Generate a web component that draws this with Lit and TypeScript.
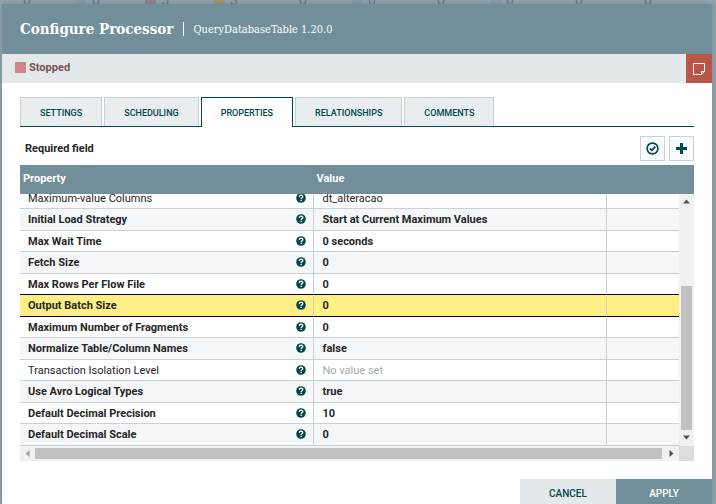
import { LitElement, html, css, svg } from "lit";
import { customElement, state } from "lit/decorators.js";
import { classMap } from "lit/directives/class-map.js";

interface Row { name: string; value: string; required: boolean; unset?: boolean }

const TABS = ["Settings", "Scheduling", "Properties", "Relationships", "Comments"];

const COUNTS = [
  { n: 0, kind: "" }, { n: 0, kind: "run" }, { n: 5, kind: "stopped" }, { n: 3, kind: "warn" }, { n: 0, kind: "" },
  { n: 0, kind: "run" }, { n: 0, kind: "" }, { n: 0, kind: "run" }, { n: 0, kind: "" }, { n: 0, kind: "" },
];

const ROWS: Row[] = [
  { name: "Maximum-value Columns", value: "dt_alteracao", required: false },
  { name: "Initial Load Strategy", value: "Start at Current Maximum Values", required: true },
  { name: "Max Wait Time", value: "0 seconds", required: true },
  { name: "Fetch Size", value: "0", required: true },
  { name: "Max Rows Per Flow File", value: "0", required: true },
  { name: "Output Batch Size", value: "0", required: true },
  { name: "Maximum Number of Fragments", value: "0", required: true },
  { name: "Normalize Table/Column Names", value: "false", required: true },
  { name: "Transaction Isolation Level", value: "No value set", required: false, unset: true },
  { name: "Use Avro Logical Types", value: "true", required: true },
  { name: "Default Decimal Precision", value: "10", required: true },
  { name: "Default Decimal Scale", value: "0", required: true },
];

const helpIcon = html`<svg class="help" viewBox="0 0 10 10" aria-hidden="true">${svg`
  <circle cx="5" cy="5" r="4.8" fill="#004849"/>
  <path d="M3.3 3.9C3.4 2.7 4.1 2.1 5.1 2.1s1.7.7 1.7 1.5c0 1.2-1.6 1.2-1.6 2.3" fill="none" stroke="#fff" stroke-width="1.3"/>
  <rect x="4.5" y="6.7" width="1.4" height="1.3" fill="#fff"/>`}</svg>`;

@customElement("app-root")
export class AppRoot extends LitElement {
  @state() private tab = "Properties";
  @state() private selected = "Output Batch Size";

  static styles = css`
    :host { display: block; min-height: 100vh; box-sizing: border-box; padding: 4px 4px 0 2px; position: relative; overflow: hidden; background: #93a6af; font-family: Roboto, "Liberation Sans", sans-serif; font-size: 11px; color: #262626; }
    * { box-sizing: border-box; }
    button { font: inherit; margin: 0; padding: 0; border: 0; border-radius: 0; cursor: pointer; }
    .canvas { position: absolute; inset: -8px 0 auto 0; display: flex; padding: 0 19px 0 7px; color: #6b7681; font-size: 14px; line-height: 16px; }
    .count { flex: 1; display: flex; align-items: center; gap: 5px; }
    .glyph { width: 11px; height: 16px; }
    .glyph.run { background: #869fab; }
    .glyph.stopped { background: #8f8591; }
    .glyph.warn { background: #a09a78; }
    .dialog { position: relative; min-height: calc(100vh - 4px); background: #fff; display: flex; flex-direction: column; box-shadow: 0 0 6px rgba(40, 60, 70, 0.3); }
    .head { height: 50px; padding: 0 18px; display: flex; align-items: center; background: #728e9b; color: #fff; font-family: "Roboto Slab", "DejaVu Serif Condensed", "DejaVu Serif", serif; }
    h1 { margin: 0; font-size: 15px; font-weight: 700; line-height: 24px; white-space: nowrap; }
    .sub { margin-left: 10px; padding: 2px 0 0 9px; border-left: 1px solid #fff; font-size: 11px; line-height: 12px; white-space: nowrap; }
    .status { height: 29px; display: flex; align-items: stretch; background: #e3e8eb; }
    .state { flex: 1; display: flex; align-items: center; gap: 3px; padding: 0 13px 3px; color: #775351; font-weight: 700; }
    .stop { width: 11px; height: 11px; background: #d18686; }
    .note { width: 26px; background: #ba554a; display: grid; place-items: center; }
    .note svg { width: 12px; height: 12px; display: block; }
    .body { padding: 14px 18px 0; }
    .tabs { display: flex; gap: 2px; height: 30px; border-bottom: 1px solid #004849; }
    .tab { height: 29px; padding: 2px 19px 0; border: 1px solid #c7d2d7; border-bottom: 0; background: #e9edf0; color: #004849; font-weight: 500; font-size: 9px; text-transform: uppercase; }
    .tab.active { height: 30px; padding-bottom: 1px; background: #fff; border-color: #004849; }
    .bar { display: flex; align-items: center; gap: 4px; height: 38px; padding: 5px 0 0 5px; font-weight: 700; line-height: 14px; }
    .bar span { flex: 1; }
    .tool { width: 25px; height: 25px; border: 1px solid #c7d2d7; background: #f9fafb; display: grid; place-items: center; }
    .tool svg { width: 13px; height: 13px; display: block; }
    table { width: 100%; border-collapse: separate; border-spacing: 0; table-layout: fixed; }
    td, th { padding: 0; text-align: left; }
    .headtable th { height: 29px; padding: 0 3px 2px; background: #728e9b; color: #fff; font-weight: 700; }
    .end { width: 72px; }
    .endhead { width: 87px; }
    .grid { display: grid; grid-template-columns: 1fr 15px; grid-template-rows: 252px 15px; }
    .view { overflow: hidden; display: flex; flex-direction: column; justify-content: flex-end; }
    .view td { height: 22px; border-bottom: 1px solid #c7d2d7; border-right: 1px solid #c7d2d7; padding: 1px 9px 0; line-height: 14px; white-space: nowrap; }
    .view td:first-child { padding-left: 8px; }
    .view tr:nth-child(odd) td { height: 21px; }
    .view tr:nth-child(even) td { background: #f4f6f7; }
    .view td:last-child { border-right: 0; }
    .view .required td { font-weight: 700; }
    .view .before td { border-bottom-color: #000; }
    .view .selected td { background: #ffef85 !important; border-bottom-color: #000; }
    .name { display: flex; align-items: center; justify-content: space-between; }
    .view .unset { color: #aaa; }
    .help { width: 10px; height: 10px; display: block; margin: -2px -2px 0 0; }
    .v, .h { display: flex; background: #f1f1f1; }
    .v { flex-direction: column; padding: 0 2px; }
    .v .thumb { margin-top: 77px; height: 144px; background: #c1c1c1; }
    .v svg, .h svg { width: 15px; height: 15px; display: block; flex: none; }
    .v svg { margin: 0 -2px; }
    .h { padding: 2px 0; }
    .h svg { margin: -2px 0; }
    .h .thumb { flex: 1; background: #c1c1c1; margin-right: 2px; }
    .corner { background: #dcdcdc; }
    .foot { display: flex; justify-content: flex-end; margin-top: auto; padding-top: 18px; }
    .foot button { width: 96px; height: 25px; padding-top: 4px; font-size: 10px; font-weight: 500; background: #e3e8eb; color: #004849; }
    .foot button.primary { background: #728e9b; color: #fff; }
  `;

  private row(r: Row, i: number) {
    const cls = { required: r.required, selected: r.name === this.selected, before: ROWS[i + 1]?.name === this.selected };
    return html`<tr class=${classMap(cls)} @click=${() => (this.selected = r.name)}>
      <td><div class="name"><span>${r.name}</span>${helpIcon}</div></td>
      <td class=${classMap({ unset: !!r.unset })}>${r.value}</td><td></td></tr>`;
  }

  render() {
    return html`
      <div class="canvas" aria-hidden="true">${COUNTS.map((c) => html`<div class="count"><i class="glyph ${c.kind}"></i><span>${c.n}</span></div>`)}</div>
      <div class="dialog" role="dialog" aria-labelledby="title">
        <header class="head"><h1 id="title">Configure Processor</h1><span class="sub">QueryDatabaseTable 1.20.0</span></header>
        <div class="status">
          <div class="state"><i class="stop"></i>Stopped</div>
          <button class="note" aria-label="Bulletins"><svg viewBox="0 0 12 12"><path d="M.5.5h11v8l-3 3h-8zM8.5 11.500v-3h3" fill="none" stroke="#fff"/></svg></button>
        </div>
        <div class="body">
          <div class="tabs" role="tablist">${TABS.map((t) => html`<button role="tab" aria-selected=${t === this.tab} class=${classMap({ tab: true, active: t === this.tab })} @click=${() => (this.tab = t)}>${t}</button>`)}</div>
          <div class="bar"><span>Required field</span>
            <button class="tool" aria-label="Verify properties"><svg viewBox="0 0 13 13" fill="none" stroke="#004849"><circle cx="6.500" cy="6.500" r="5.400" stroke-width="1.600"/><path d="M3.800 6.300l2 2 3.500-3.700" stroke-width="1.800"/></svg></button>
            <button class="tool" aria-label="Add property"><svg viewBox="0 0 13 13"><path d="M5 1h3v4h4v3h-4v4h-3v-4h-4v-3h4z" fill="#004849"/></svg></button>
          </div>
          <table class="headtable"><thead><tr><th>Property</th><th>Value</th><th class="endhead"></th></tr></thead></table>
          <div class="grid">
            <div class="view"><table><colgroup><col /><col /><col class="end" /></colgroup><tbody>${ROWS.map((r, i) => this.row(r, i))}</tbody></table></div>
            <div class="v"><svg viewBox="0 0 15 15"><path d="M4 9.500h7l-3.500-4z" fill="#505050"/></svg><div class="thumb"></div><svg viewBox="0 0 15 15"><path d="M4 5.500h7l-3.500 4z" fill="#505050"/></svg></div>
            <div class="h"><svg viewBox="0 0 15 15"><path d="M9.500 4v7l-4-3.500z" fill="#a3a3a3"/></svg><div class="thumb"></div><svg viewBox="0 0 15 15"><path d="M5.500 4v7l4-3.500z" fill="#505050"/></svg></div>
            <div class="corner"></div>
          </div>
        </div>
        <footer class="foot"><button>CANCEL</button><button class="primary">APPLY</button></footer>
      </div>`;
  }
}
